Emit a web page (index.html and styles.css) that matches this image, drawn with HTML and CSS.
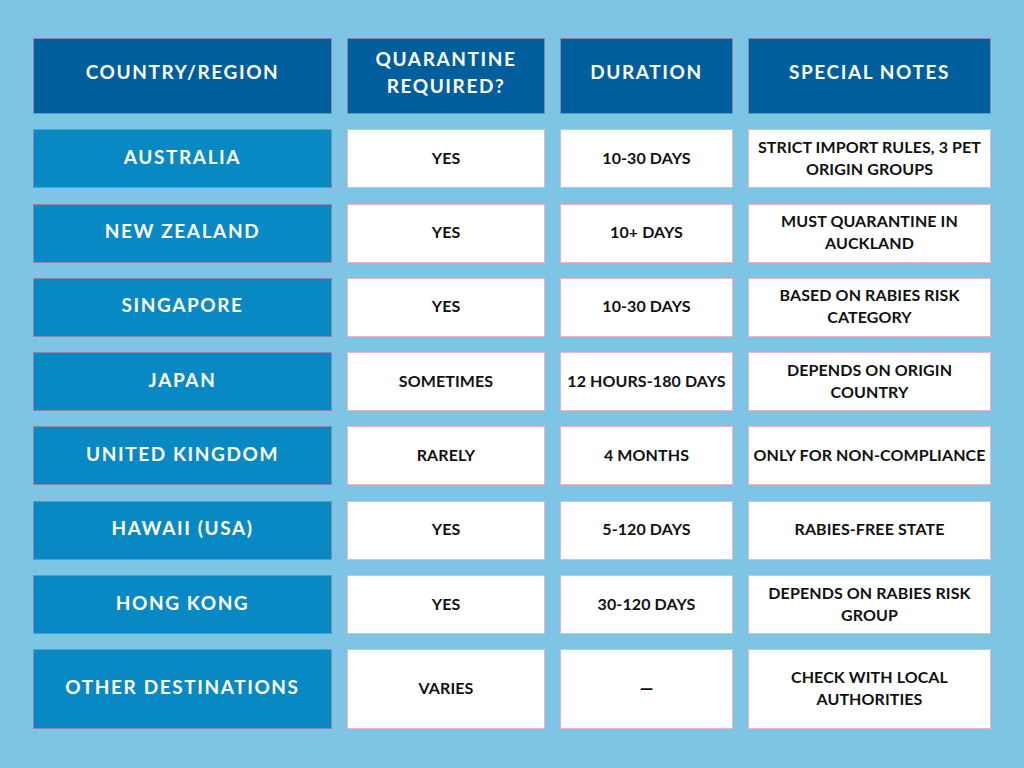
FILE: index.html
```html
<!DOCTYPE html>
<html lang="en">
<head>
<meta charset="utf-8">
<title>Pet Quarantine by Country</title>
<link rel="stylesheet" href="styles.css">
</head>
<body>
<div class="page">
  <div class="table">
    <div class="cell head">Country/Region</div>
    <div class="cell head">Quarantine<br>Required?</div>
    <div class="cell head">Duration</div>
    <div class="cell head">Special Notes</div>

    <div class="cell label">Australia</div>
    <div class="cell data">Yes</div>
    <div class="cell data">10-30 Days</div>
    <div class="cell data">Strict import rules, 3 pet<br>origin groups</div>

    <div class="cell label">New Zealand</div>
    <div class="cell data">Yes</div>
    <div class="cell data">10+ Days</div>
    <div class="cell data">Must quarantine in<br>Auckland</div>

    <div class="cell label">Singapore</div>
    <div class="cell data">Yes</div>
    <div class="cell data">10-30 Days</div>
    <div class="cell data">Based on rabies risk<br>category</div>

    <div class="cell label">Japan</div>
    <div class="cell data">Sometimes</div>
    <div class="cell data">12 Hours-180 Days</div>
    <div class="cell data">Depends on origin<br>country</div>

    <div class="cell label">United Kingdom</div>
    <div class="cell data">Rarely</div>
    <div class="cell data">4 Months</div>
    <div class="cell data">Only for non-compliance</div>

    <div class="cell label">Hawaii (USA)</div>
    <div class="cell data">Yes</div>
    <div class="cell data">5-120 Days</div>
    <div class="cell data">Rabies-free state</div>

    <div class="cell label">Hong Kong</div>
    <div class="cell data">Yes</div>
    <div class="cell data">30-120 Days</div>
    <div class="cell data">Depends on rabies risk<br>group</div>

    <div class="cell label">Other Destinations</div>
    <div class="cell data">Varies</div>
    <div class="cell data"><span class="dash">—</span></div>
    <div class="cell data">Check with local<br>authorities</div>
  </div>
</div>
</body>
</html>
```
FILE: styles.css
```css
html, body {
  margin: 0;
  padding: 0;
  background: #7ec5e5;
}

.page {
  width: 1024px;
  height: 768px;
  padding: 38px 0 0 33px;
  box-sizing: border-box;
}

.table {
  display: grid;
  grid-template-columns: 299px 198px 173px 243px;
  grid-template-rows: 76px repeat(7, 59px) 80px;
  column-gap: 15px;
  row-gap: 15.3px;
}

.cell {
  box-sizing: border-box;
  display: flex;
  align-items: center;
  justify-content: center;
  text-align: center;
  text-transform: uppercase;
}

.head {
  background: #005e9c;
  border: 1px solid #8a86ad;
  color: #ffffff;
  font-family: "Lato", "Noto Sans", sans-serif;
  font-weight: 700;
  font-size: 19px;
  letter-spacing: 1.6px;
  line-height: 27px;
  padding-bottom: 9px;
}

.label {
  background: #0989c4;
  border: 1px solid #8a86ad;
  color: #ffffff;
  font-family: "Lato", "Noto Sans", sans-serif;
  font-weight: 700;
  font-size: 19px;
  letter-spacing: 1.6px;
  padding-bottom: 5px;
}

.data {
  background: #ffffff;
  border: 1px solid #eeb4c2;
  color: #111111;
  font-family: "Lato", "Noto Sans", sans-serif;
  font-weight: 700;
  font-size: 16px;
  letter-spacing: 0.1px;
  line-height: 22px;
  padding-bottom: 2px;
}

.dash {
  font-weight: 900;
  font-size: 17px;
}
```
